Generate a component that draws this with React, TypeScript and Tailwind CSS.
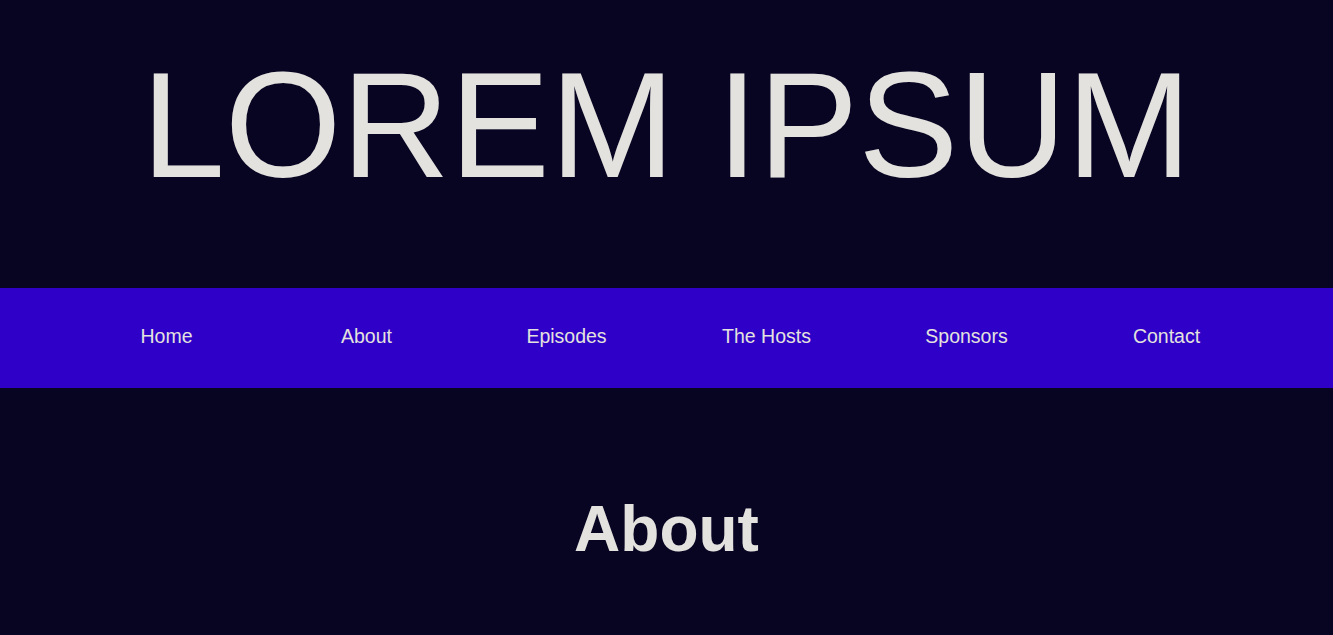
const links = ["Home", "About", "Episodes", "The Hosts", "Sponsors", "Contact"];

export default function App() {
  return (
    <div className="min-h-screen bg-[#080523] text-[#e4e2de] font-['Liberation_Sans',Arial,sans-serif]">
      <header className="h-[288px] pt-[50px]">
        <h1 className="text-center text-[150px] leading-none font-normal">LOREM IPSUM</h1>
      </header>
      <nav className="h-[100px] bg-[#2e00c8] flex justify-center items-center">
        <ul className="flex w-[1200px] -mt-[3px]">
          {links.map((l) => (
            <li key={l} className="w-[200px] text-center text-[19.5px]">
              <a href="#">{l}</a>
            </li>
          ))}
        </ul>
      </nav>
      <main className="pt-[93px] pb-20">
        <h2 className="text-center text-[64px] font-bold">About</h2>
      </main>
    </div>
  );
}
